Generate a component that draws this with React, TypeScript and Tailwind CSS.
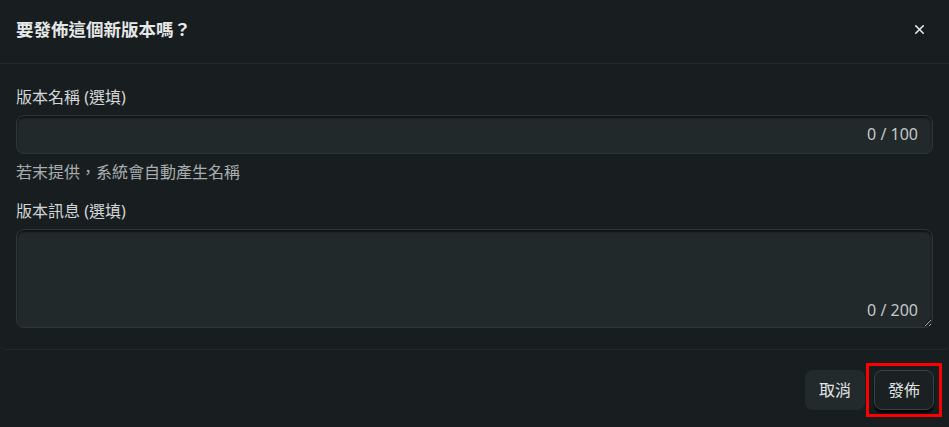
import React from 'react';
import { X } from 'lucide-react';

export default function App() {
  const font = { fontFamily: '"Noto Sans", "Noto Sans CJK TC", sans-serif' };

  return (
    <div className="w-[949px] h-[427px] bg-[#181e20] flex flex-col text-[#d6d8d8]" style={font}>
      {/* header */}
      <div className="h-[64px] flex items-center justify-between pl-4 pr-[22px] border-b border-[#1f2b2c]">
        <h2 className="text-[17.5px] font-bold text-[#e6e8e8] -mt-1">要發佈這個新版本嗎？</h2>
        <button className="text-[#e6e8e8] -mt-1">
          <X className="w-[15px] h-[15px]" strokeWidth={2.6} />
        </button>
      </div>

      {/* body */}
      <div className="h-[286px] flex flex-col px-4 pt-[22px] border-b border-[#1f2b2c] rounded-b-md">
        <label className="text-[16px] leading-[22px] text-[#d4d6d6]">版本名稱 (選填)</label>
        <div className="relative mt-[7px]">
          <input
            className="w-full h-[39px] rounded-lg bg-[#22292b] border border-[#2e3638] shadow-[inset_0_2px_2px_rgba(0,0,0,0.55)] outline-none px-4"
          />
          <span className="absolute right-[15px] top-[9px] text-[16px] leading-[20px] text-[#c4c8c8]">0 / 100</span>
        </div>
        <p className="text-[16px] leading-[20px] text-[#a9adad] mt-[8px]">若末提供，系統會自動產生名稱</p>
        <label className="text-[16px] leading-[22px] text-[#d4d6d6] mt-[18px]">版本訊息 (選填)</label>
        <div className="relative mt-[7px]">
          <textarea
            className="block w-full h-[99px] rounded-lg bg-[#22292b] border border-[#2e3638] shadow-[inset_0_2px_2px_rgba(0,0,0,0.55)] outline-none px-4 py-2 [color-scheme:dark]"
          />
          <span className="absolute right-[15px] bottom-[8px] text-[16px] leading-[20px] text-[#c4c8c8]">0 / 200</span>
        </div>
      </div>

      {/* footer */}
      <div className="flex-1 flex items-start justify-end pr-[7px] pt-[13px] gap-[1px]">
        <button className="mt-[7px] w-[60px] h-[40px] rounded-lg bg-[#222a2c] text-[16px] text-[#e2e4e4]">取消</button>
        <div className="border-[3px] border-[#ff0000] px-[5px] py-[4px]">
          <button className="w-[60px] h-[40px] rounded-lg bg-[#1b2123] border border-[#3a4244] shadow-[0_3px_2px_rgba(0,0,0,0.8)] text-[16px] text-[#e2e4e4]">
            發佈
          </button>
        </div>
      </div>
    </div>
  );
}
